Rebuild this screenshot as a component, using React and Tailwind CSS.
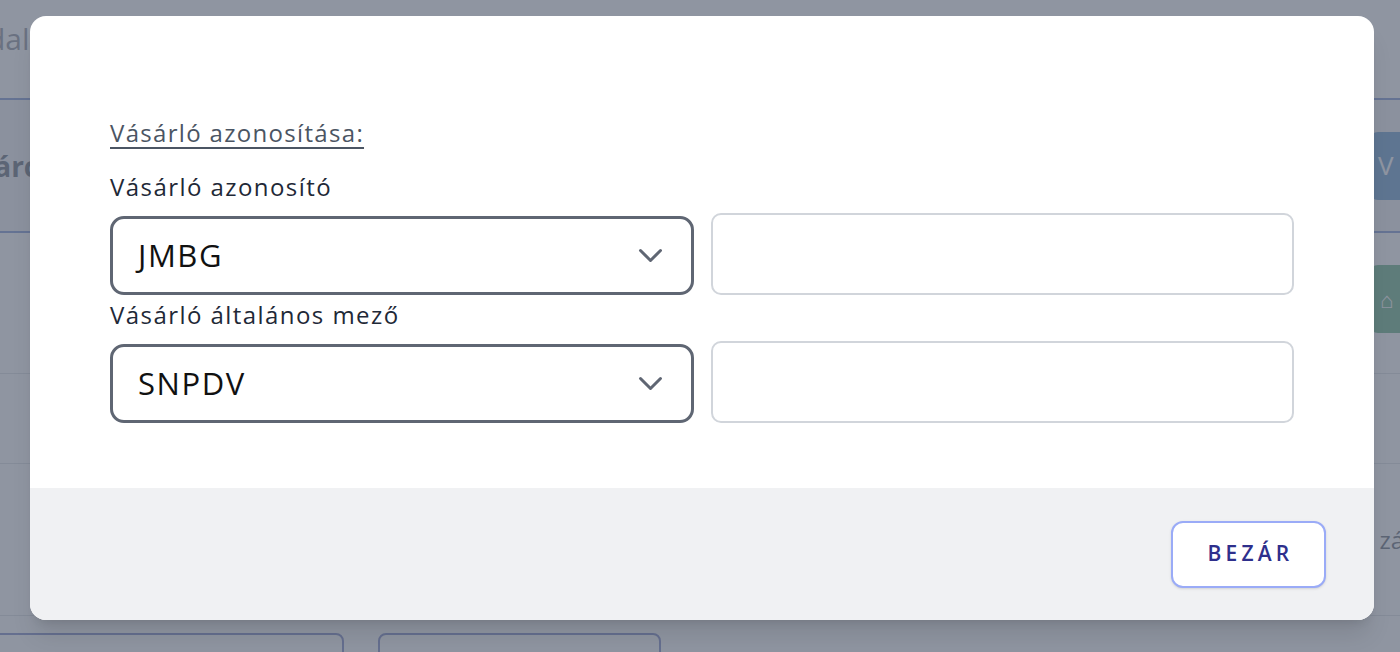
import React from 'react';

const font = { fontFamily: '"Open Sans", "Noto Sans", sans-serif' };

const Chevron = () => (
  <svg width="25" height="15" viewBox="0 0 25 15" fill="none" className="text-[#5f6673]">
    <path d="M2.5 2.5l10 10 10-10" stroke="currentColor" strokeWidth="3" strokeLinecap="round" strokeLinejoin="round" />
  </svg>
);

const SelectBox = ({ value }) => (
  <div className="h-[79px] rounded-[14px] border-[3px] border-[#5f6673] bg-white flex items-center justify-between pl-[25px] pr-[28px]">
    <span className="text-[31px] text-[#111111] tracking-[0.05em]">{value}</span>
    <Chevron />
  </div>
);

const InputBox = () => (
  <div className="h-[82px] rounded-[10px] border-2 border-[#d1d5db] bg-white" />
);

// dimmed page behind the dialog
const BackgroundPage = () => (
  <div className="w-[1400px] h-[652px] bg-white overflow-hidden">
    <div className="h-[98px] -ml-[44px] pt-[16px] text-[30px] text-[#6b7280]">Oldal</div>
    <div className="h-[135px] border-y-2 border-[#5a78c8] bg-[#eef0f4] flex items-center justify-between -ml-[22px]">
      <span className="text-[28px] font-bold text-[#374151]">Tárca</span>
      <div className="h-[68px] w-[120px] -mr-[90px] bg-[#3c7fc0] rounded-lg text-white text-[26px] flex items-center pl-[8px]">V</div>
    </div>
    <div className="h-[140px] flex items-center justify-end">
      <div className="h-[68px] w-[120px] -mr-[90px] mt-[-8px] bg-[#3e9a63] rounded-lg text-white flex items-center pl-[10px]">
        <span className="text-[22px]">⌂</span>
      </div>
    </div>
    <div className="h-[90px] border-t border-[#d1d5db]" />
    <div className="h-[153px] border-y border-[#d1d5db] flex items-center justify-end">
      <span className="text-[24px] text-[#374151] -mr-[14px]">zár</span>
    </div>
    <div className="flex gap-[34px] pt-[17px]">
      <div className="w-[354px] h-[50px] -ml-[10px] rounded-t-lg border-2 border-[#5a68b8]" />
      <div className="w-[283px] h-[50px] rounded-t-lg border-2 border-[#5a68b8]" />
    </div>
  </div>
);

export default function App() {
  return (
    <div className="relative w-[1400px] h-[652px] overflow-hidden" style={font}>
      <BackgroundPage />
      <div className="absolute inset-0 bg-[#6a7282]/75 flex items-start">
        <div className="ml-[30px] mt-[16px] w-[1344px] h-[604px] bg-white rounded-[16px] overflow-hidden shadow-xl flex flex-col">
          <div className="h-[472px] px-[80px] pt-[101px]">
            <div className="text-[24px] leading-[32px] text-[#4b5563] underline underline-offset-[5px] decoration-[1.5px] tracking-[0.055em]">
              Vásárló azonosítása:
            </div>
            <div className="mt-[22px] text-[24px] leading-[32px] text-[#1f2937] tracking-[0.06em]">Vásárló azonosító</div>
            <div className="grid grid-cols-2 gap-[17px] items-end mt-[10px]">
              <SelectBox value="JMBG" />
              <InputBox />
            </div>
            <div className="text-[24px] leading-[32px] text-[#1f2937] mt-[4px] tracking-[0.06em]">Vásárló általános mező</div>
            <div className="grid grid-cols-2 gap-[17px] items-end mt-[10px]">
              <SelectBox value="SNPDV" />
              <InputBox />
            </div>
          </div>
          <div className="flex-1 bg-[#f0f1f3] flex items-center justify-end pr-[48px]">
            <button className="w-[155px] h-[67px] rounded-[12px] border-2 border-[#9aabf7] bg-white shadow-sm text-[#2e2f8c] text-[21px] font-semibold tracking-[0.2em] pl-[4px]">
              BEZÁR
            </button>
          </div>
        </div>
      </div>
    </div>
  );
}
